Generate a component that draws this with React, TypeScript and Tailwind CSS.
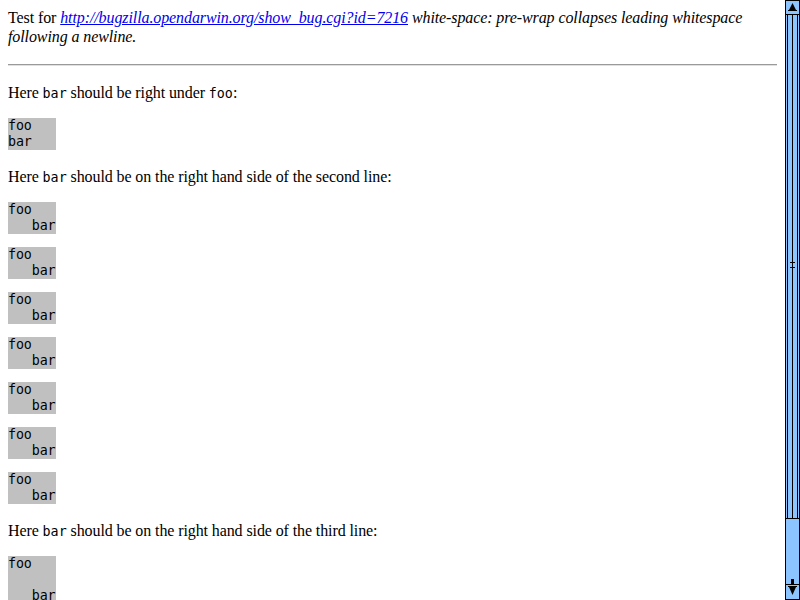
const serif = { fontFamily: '"Liberation Serif", "Times New Roman", serif' };

function Code({ children }: { children: string }) {
  return (
    <code className="font-['DejaVu_Sans_Mono',monospace] text-[13.33px] leading-none tracking-normal">{children}</code>
  );
}

function Box({ lines }: { lines: string[] }) {
  return (
    <pre className="w-[48px] bg-[#c0c0c0] font-['DejaVu_Sans_Mono',monospace] text-[13.33px] leading-[16px] whitespace-pre text-black">
      {lines.join("\n")}
    </pre>
  );
}

function Scrollbar() {
  return (
    <svg width="15" height="600" viewBox="0 0 15 600" className="block shrink-0">
      <rect x="0" y="0" width="15" height="600" fill="#8cc4ff" />
      <rect x="0" y="0" width="1" height="600" fill="#000" />
      <rect x="14" y="0" width="1" height="600" fill="#000" />
      {/* up button */}
      <rect x="0" y="0" width="15" height="1" fill="#000" />
      <polygon points="7.5,3 11,10 4,10" fill="#000" />
      <rect x="3" y="10" width="9" height="1" fill="#000" />
      <rect x="0" y="14" width="15" height="1" fill="#000" />
      {/* thumb */}
      <rect x="2" y="15" width="1" height="503" fill="#000" />
      <rect x="12" y="15" width="1" height="503" fill="#000" />
      <rect x="7" y="15" width="1" height="503" fill="#000" />
      <rect x="5" y="262" width="5" height="1" fill="#000" />
      <rect x="5" y="267" width="5" height="1" fill="#000" />
      <rect x="0" y="518" width="15" height="1" fill="#000" />
      {/* down button */}
      <rect x="0" y="584" width="15" height="1" fill="#000" />
      <rect x="6" y="579" width="3" height="5" fill="#000" />
      <rect x="3" y="586" width="9" height="1" fill="#000" />
      <polygon points="4,587 11,587 7.5,595" fill="#000" />
      <rect x="0" y="599" width="15" height="1" fill="#000" />
    </svg>
  );
}

export default function App() {
  const rightSide = Array.from({ length: 7 });

  return (
    <div className="flex h-[600px] w-[800px] overflow-hidden bg-white text-black" style={serif}>
      <div className="flex-1 px-2 pt-2 text-[16px] tracking-[-0.1px]">
        <p className="leading-[19px]">
          Test for{" "}
          <i>
            <a href="#" className="text-[#0000ee] underline">
              http://bugzilla.opendarwin.org/show_bug.cgi?id=7216
            </a>{" "}
            white-space: pre-wrap collapses leading whitespace following a newline.
          </i>
        </p>

        <hr className="mt-[18px] border-t border-b border-t-[#9a9a9a] border-b-[#e0e0e0]" />

        <p className="mt-[17px] leading-[19px]">
          Here <Code>bar</Code> should be right under <Code>foo</Code>:
        </p>
        <div className="mt-[16px]">
          <Box lines={["foo", "bar"]} />
        </div>

        <p className="mt-[17px] leading-[19px]">
          Here <Code>bar</Code> should be on the right hand side of the second line:
        </p>
        <div className="mt-[16px] flex flex-col gap-[13px]">
          {rightSide.map((_, i) => (
            <Box key={i} lines={["foo", "   bar"]} />
          ))}
        </div>

        <p className="mt-[17px] leading-[19px]">
          Here <Code>bar</Code> should be on the right hand side of the third line:
        </p>
        <div className="mt-[16px]">
          <Box lines={["foo", "", "   bar"]} />
        </div>
      </div>
      <Scrollbar />
    </div>
  );
}
